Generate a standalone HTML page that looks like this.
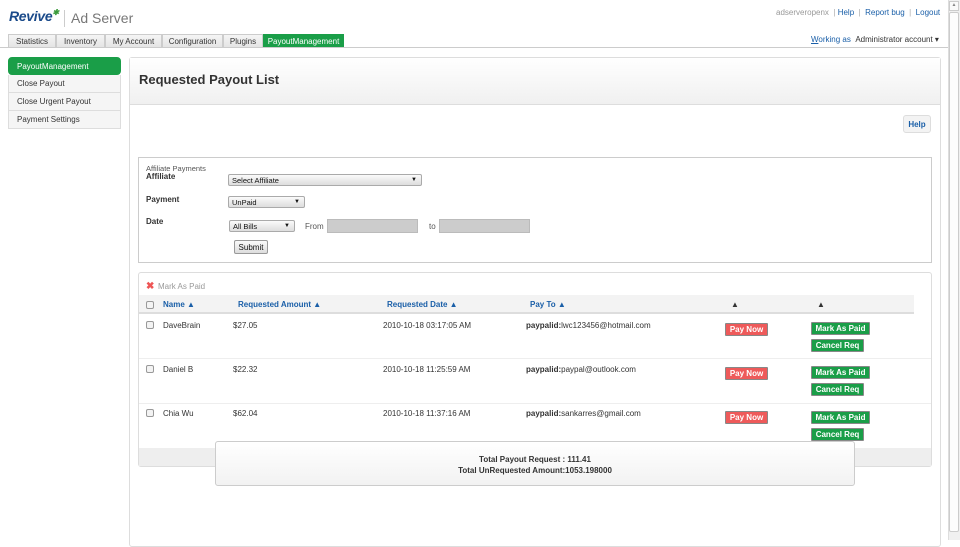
<!DOCTYPE html>
<html><head><style>
*{box-sizing:border-box;margin:0;padding:0}
body{width:960px;height:540px;overflow:hidden;font-family:"Liberation Sans",Arial,sans-serif;font-size:8px;color:#333;background:#fff;position:relative}
.a{position:absolute}
a{color:#1a5fa8;text-decoration:none}
.tab{position:absolute;top:34px;height:14px;border:1px solid #ccc;border-bottom:none;background:linear-gradient(#f5f5f5,#e3e3e3);font-size:8px;line-height:13px;text-align:center;color:#333}
.side div{height:18px;line-height:18px;padding-left:8px;border:1px solid #ddd;border-top:none;background:#f5f5f5;font-size:8px}
.btn{position:absolute;height:13px;line-height:12px;font-size:8px;font-weight:bold;color:#fff;text-align:center;border:1px solid #888;border-radius:1px}
.red{background:#ee5a5a;width:43px}
.grn{background:#1a9e48}
.sel{position:absolute;height:12px;border:1px solid #aaa;border-radius:2px;background:linear-gradient(#fafafa,#ddd);font-size:7.5px;line-height:11px;padding-left:3px;color:#111}
.sel:after{content:"▼";position:absolute;right:4px;font-size:6px}
.cb{position:absolute;width:8px;height:8px;border:1px solid #999;border-radius:2px;background:#f3f3f3}
.th{position:absolute;top:300px;color:#1a5fa8;font-weight:bold;font-size:8px}
</style></head><body>
<div class="a" style="left:9px;top:8px;font-size:14px;font-weight:bold;font-style:italic;color:#1a4a8a;letter-spacing:-0.3px">Revive<span style="color:#3a9a3a;font-size:8px;vertical-align:top">✱</span></div>
<div class="a" style="left:64px;top:10px;width:1px;height:17px;background:#ccc"></div>
<div class="a" style="left:71px;top:10px;font-size:14px;color:#777">Ad Server</div>
<div class="a" style="left:776px;top:8px;font-size:8px;color:#999">adserveropenx <span style="color:#aaa">&nbsp;|&nbsp;</span><a>Help</a><span style="color:#aaa"> &nbsp;|&nbsp; </span><a>Report bug</a><span style="color:#aaa"> &nbsp;|&nbsp; </span><a>Logout</a></div>
<div class="a" style="left:811px;top:35px;font-size:8px"><a style="text-decoration:underline">W</a><a>orking as</a> &nbsp;Administrator account ▾</div>
<div class="tab" style="left:8px;width:48px">Statistics</div>
<div class="tab" style="left:56px;width:49px">Inventory</div>
<div class="tab" style="left:105px;width:57px">My Account</div>
<div class="tab" style="left:162px;width:61px">Configuration</div>
<div class="tab" style="left:223px;width:40px">Plugins</div>
<div class="tab" style="left:263px;width:81px;background:#1a9e48;color:#fff;border-color:#1a9e48">PayoutManagement</div>
<div class="a" style="left:0;top:47px;width:948px;height:1px;background:#ccc"></div>
<div class="a side" style="left:8px;top:57px;width:113px">
<div style="background:#1a9e48;color:#fff;border:1px solid #1a9e48;border-radius:4px">PayoutManagement</div>
<div>Close Payout</div><div>Close Urgent Payout</div><div>Payment Settings</div></div>
<div class="a" style="left:129px;top:57px;width:812px;height:490px;background:#fff;border:1px solid #ddd;border-radius:3px"></div>
<div class="a" style="left:130px;top:58px;width:810px;height:47px;background:linear-gradient(#fff,#f0f0f0);border-bottom:1px solid #ddd"></div>
<div class="a" style="left:139px;top:72px;font-size:13px;font-weight:bold;color:#333">Requested Payout List</div>
<div class="a" style="left:903px;top:115px;width:28px;height:18px;border:1px solid #ddd;border-radius:3px;background:#f3f3f3;font-weight:bold;color:#1a5fa8;text-align:center;line-height:17px">Help</div>
<div class="a" style="left:138px;top:157px;width:794px;height:106px;border:1px solid #ccc"></div>
<div class="a" style="left:146px;top:164px;font-size:7.5px;color:#555">Affiliate Payments</div>
<div class="a" style="left:146px;top:172px;font-weight:bold">Affiliate</div>
<div class="sel" style="left:228px;top:174px;width:194px">Select Affiliate</div>
<div class="a" style="left:146px;top:195px;font-weight:bold">Payment</div>
<div class="sel" style="left:228px;top:196px;width:77px">UnPaid</div>
<div class="a" style="left:146px;top:217px;font-weight:bold">Date</div>
<div class="sel" style="left:229px;top:220px;width:66px">All Bills</div>
<div class="a" style="left:305px;top:222px;color:#555">From</div>
<div class="a" style="left:327px;top:219px;width:91px;height:14px;background:#ccc;border:1px solid #bbb"></div>
<div class="a" style="left:429px;top:222px;color:#555">to</div>
<div class="a" style="left:439px;top:219px;width:91px;height:14px;background:#ccc;border:1px solid #bbb"></div>
<div class="a" style="left:234px;top:240px;width:34px;height:14px;border:1px solid #999;border-radius:2px;background:linear-gradient(#fafafa,#ddd);text-align:center;line-height:13px;color:#111">Submit</div>
<div class="a" style="left:138px;top:272px;width:794px;height:195px;border:1px solid #ddd;border-radius:3px"></div>
<div class="a" style="left:139px;top:448px;width:792px;height:18px;background:#eee"></div>
<div class="a" style="left:146px;top:281px;color:#e55;font-size:10px;font-weight:bold">✖</div>
<div class="a" style="left:158px;top:282px;color:#999">Mark As Paid</div>
<div class="a" style="left:139px;top:295px;width:775px;height:19px;background:#f3f3f3;border-bottom:2px solid #ddd"></div>
<div class="cb" style="left:146px;top:301px"></div>
<div class="th" style="left:163px">Name ▲</div>
<div class="th" style="left:238px">Requested Amount ▲</div>
<div class="th" style="left:387px">Requested Date ▲</div>
<div class="th" style="left:530px">Pay To ▲</div>
<div class="th" style="left:731px;color:#333">▲</div>
<div class="th" style="left:817px;color:#333">▲</div>

<div class="cb" style="left:146px;top:321px"></div>
<div class="a" style="left:163px;top:321px">DaveBrain</div>
<div class="a" style="left:233px;top:321px">$27.05</div>
<div class="a" style="left:383px;top:321px">2010-10-18 03:17:05 AM</div>
<div class="a" style="left:526px;top:321px"><b>paypalid:</b>lwc123456@hotmail.com</div>
<div class="btn red" style="left:725px;top:323px">Pay Now</div>
<div class="btn grn" style="left:811px;top:322px;width:59px">Mark As Paid</div>
<div class="btn grn" style="left:811px;top:339px;width:53px">Cancel Req</div>
<div class="a" style="left:139px;top:358px;width:792px;height:1px;background:#eee"></div>

<div class="cb" style="left:146px;top:365px"></div>
<div class="a" style="left:163px;top:365px">Daniel B</div>
<div class="a" style="left:233px;top:365px">$22.32</div>
<div class="a" style="left:383px;top:365px">2010-10-18 11:25:59 AM</div>
<div class="a" style="left:526px;top:365px"><b>paypalid:</b>paypal@outlook.com</div>
<div class="btn red" style="left:725px;top:367px">Pay Now</div>
<div class="btn grn" style="left:811px;top:366px;width:59px">Mark As Paid</div>
<div class="btn grn" style="left:811px;top:383px;width:53px">Cancel Req</div>
<div class="a" style="left:139px;top:403px;width:792px;height:1px;background:#eee"></div>

<div class="cb" style="left:146px;top:409px"></div>
<div class="a" style="left:163px;top:409px">Chia Wu</div>
<div class="a" style="left:233px;top:409px">$62.04</div>
<div class="a" style="left:383px;top:409px">2010-10-18 11:37:16 AM</div>
<div class="a" style="left:526px;top:409px"><b>paypalid:</b>sankarres@gmail.com</div>
<div class="btn red" style="left:725px;top:411px">Pay Now</div>
<div class="btn grn" style="left:811px;top:411px;width:59px">Mark As Paid</div>
<div class="btn grn" style="left:811px;top:428px;width:53px">Cancel Req</div>

<div class="a" style="left:215px;top:441px;width:640px;height:45px;border:1px solid #ccc;border-radius:3px;background:linear-gradient(#fff,#f2f2f2);text-align:center;font-weight:bold;font-size:8px;padding-top:12px;line-height:11px">Total Payout Request : 111.41<br>Total UnRequested Amount:1053.198000</div>

<div class="a" style="left:948px;top:0;width:12px;height:540px;background:#f0f0f0;border-left:1px solid #ddd"></div>
<div class="a" style="left:949px;top:1px;width:10px;height:10px;background:#fafafa;border:1px solid #ccc;font-size:5px;text-align:center;color:#888">▲</div>
<div class="a" style="left:949px;top:12px;width:10px;height:520px;background:#fdfdfd;border:1px solid #ccc;border-radius:2px"></div>
</body></html>
